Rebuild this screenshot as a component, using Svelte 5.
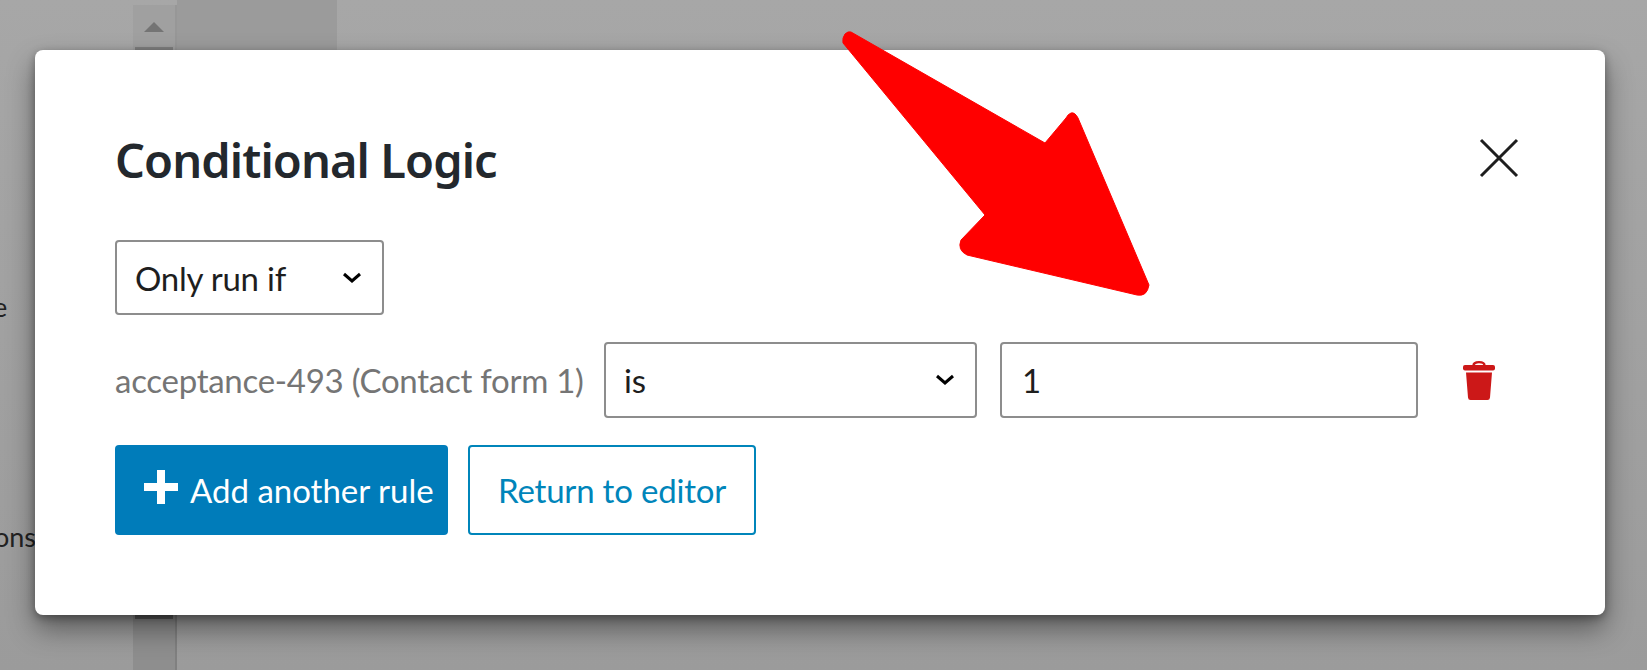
<script>
  let field = 'acceptance-493 (Contact form 1)';
</script>

<main class="page">
  <div class="backdrop">
    <div class="stub stub-e">e</div>
    <div class="stub stub-ons">ons</div>
    <div class="scroll">
      <span class="up"></span>
      <span class="thumb"></span>
    </div>
    <div class="scroll-low"><span class="thumb-low"></span></div>
    <div class="tab"></div>
  </div>

  <section class="modal">
    <header>
      <h2>Conditional Logic</h2>
      <button class="close" aria-label="Close">
        <svg viewBox="0 0 40 40" width="40" height="40">
          <path d="M2 2 38 38M38 2 2 38" stroke="#1e1e1e" stroke-width="3" fill="none" />
        </svg>
      </button>
    </header>

    <div class="select first">
      <span>Only run if</span>
      <svg class="chev" viewBox="0 0 20 12" width="20" height="12"><path d="M2 2 10 9 18 2" /></svg>
    </div>

    <div class="rule">
      <span class="label">{field}</span>
      <div class="select op">
        <span>is</span>
        <svg class="chev" viewBox="0 0 20 12" width="20" height="12"><path d="M2 2 10 9 18 2" /></svg>
      </div>
      <div class="input">1</div>
      <svg class="trash" viewBox="0 0 32 40" width="32" height="40">
        <path d="M10.5 5.5C10.5 1 21.5 1 21.5 5.5" fill="none" stroke="#cc1818" stroke-width="2.4" />
        <rect x="0" y="5" width="32" height="5.5" rx="2" fill="#cc1818" />
        <path d="M3 12.5H29L27 37.5Q26.8 40 24.5 40H7.5Q5.2 40 5 37.5Z" fill="#cc1818" />
      </svg>
    </div>

    <div class="actions">
      <button class="primary">
        <svg viewBox="0 0 34 34" width="34" height="34"><path d="M13 0H21V13H34V21H21V34H13V21H0V13H13Z" fill="#fff" /></svg>
        <span>Add another rule</span>
      </button>
      <button class="secondary">Return to editor</button>
    </div>
  </section>

  <svg class="arrow" viewBox="0 0 1647 670" width="1647" height="670">
    <path d="M851 32Q848 31 845 34Q842 38 843 43L985 215L961 240Q957 250 967 255L1137 295Q1147 297 1149 285L1078 118Q1075 112 1071 113Q1068 114 1066 118L1045 143Z" fill="#ff0000" stroke="#ff0000" stroke-width="1" stroke-linejoin="round" />
  </svg>
</main>

<style>
  :global(body) {
    margin: 0;
    background: #a3a3a3;
    overflow: hidden;
  }

  .page {
    position: relative;
    width: 1647px;
    height: 670px;
    overflow: hidden;
    font-family: "Lato", "Noto Sans", sans-serif;
    color: #1e1e1e;
  }

  .backdrop {
    position: absolute;
    inset: 0;
    background: linear-gradient(#a7a7a7, #9b9b9b);
  }

  .stub {
    position: absolute;
    left: -6px;
    font-size: 27px;
    color: #222;
  }
  .stub-e { top: 290px; left: -7px; }
  .stub-ons { top: 520px; }

  .scroll {
    position: absolute;
    left: 133px;
    top: 5px;
    width: 44px;
    height: 45px;
    background: #a0a0a0;
    border-right: 2px solid #979797;
    box-sizing: border-box;
  }
  .up {
    position: absolute;
    left: 11px;
    top: 17px;
    border: 10px solid transparent;
    border-top: 0;
    border-bottom-color: #747474;
  }
  .thumb {
    position: absolute;
    left: 2px;
    top: 42px;
    width: 38px;
    height: 3px;
    background: #7f7f7f;
  }
  .scroll-low {
    position: absolute;
    left: 133px;
    top: 600px;
    width: 44px;
    height: 70px;
    background: #8e8e8e;
    border-right: 2px solid #808080;
    box-sizing: border-box;
  }
  .thumb-low {
    position: absolute;
    left: 2px;
    top: 15px;
    width: 38px;
    height: 4px;
    background: #5e5e5e;
  }
  .tab {
    position: absolute;
    left: 177px;
    top: 0;
    width: 160px;
    height: 50px;
    background: #9b9b9b;
  }

  .modal {
    position: absolute;
    left: 35px;
    top: 50px;
    width: 1570px;
    height: 565px;
    box-sizing: border-box;
    padding: 80px 80px 0;
    background: #fff;
    border-radius: 8px;
    box-shadow: 0 14px 28px rgba(0, 0, 0, 0.42), 0 3px 9px rgba(0, 0, 0, 0.32);
  }

  header {
    display: flex;
    justify-content: space-between;
    align-items: center;
    height: 56px;
    margin-bottom: 54px;
  }
  h2 {
    margin: 3px 0 0;
    font-family: "Noto Sans", sans-serif;
    font-size: 47px;
    font-weight: 600;
    letter-spacing: -0.9px;
    line-height: 56px;
    color: #23282d;
  }
  .close {
    padding: 0;
    border: 0;
    background: none;
    margin-right: 6px;
    height: 40px;
  }

  .select, .input {
    box-sizing: border-box;
    display: flex;
    align-items: center;
    height: 75px;
    background: #fff;
    border: 2px solid #8d8d8d;
    border-radius: 4px;
    font-size: 33px;
    letter-spacing: -0.25px;
    color: #1e1e1e;
  }
  .select {
    justify-content: space-between;
    padding: 0 20px 0 18px;
  }
  .first { width: 269px; }
  .chev {
    fill: none;
    stroke: #000;
    stroke-width: 3;
  }

  .rule {
    display: flex;
    align-items: center;
    margin-top: 27px;
    height: 76px;
  }
  .label {
    width: 489px;
    font-size: 33px;
    letter-spacing: -0.27px;
    color: #757575;
    white-space: nowrap;
  }
  .rule .select, .rule .input { height: 76px; }
  .op { width: 373px; margin-right: 23px; }
  .input {
    width: 418px;
    padding: 0 20px;
    margin-right: 45px;
  }
  .trash { flex: none; }

  .actions {
    display: flex;
    gap: 20px;
    margin-top: 27px;
  }
  .actions button {
    box-sizing: border-box;
    height: 90px;
    border-radius: 4px;
    font: inherit;
    font-size: 33px;
    display: flex;
    align-items: center;
    white-space: nowrap;
  }
  .primary {
    width: 333px;
    padding: 0 14px 0 29px;
    gap: 12px;
    color: #fff;
    background: #007cba;
    border: 0;
  }
  .primary svg { margin-top: -6px; }
  .secondary {
    width: 288px;
    justify-content: center;
    padding: 0;
    color: #0085ba;
    background: #fff;
    border: 2px solid #0085ba;
    letter-spacing: -0.2px;
  }

  .arrow {
    position: absolute;
    inset: 0;
    pointer-events: none;
  }
</style>
